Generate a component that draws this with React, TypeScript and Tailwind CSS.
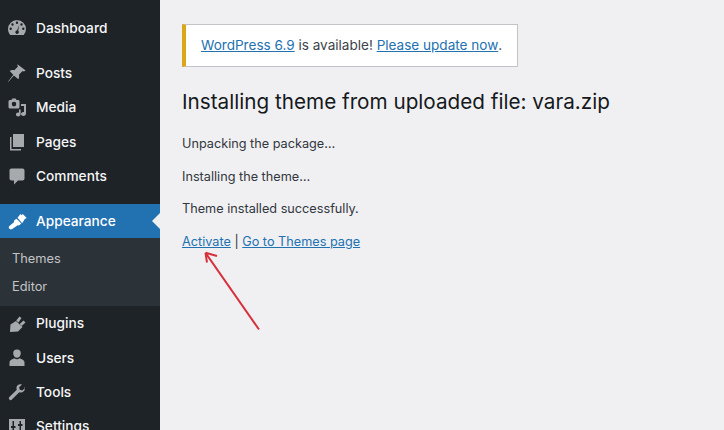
const gray = "#a7aaad";

function DashboardIcon() {
  return (
    <svg width="20" height="20" viewBox="0 0 20 20" fill={gray}>
      <path
        fillRule="evenodd"
        d="M10 2a9 9 0 0 0-9 9c0 2.300.9 4.500 2.300 6h13.400a9 9 0 0 0 2.300-6 9 9 0 0 0-9-9zM10 3.500a1.200 1.200 0 1 1 0 2.400 1.200 1.200 0 0 1 0-2.400zM5.500 5.300a1.200 1.200 0 1 1 0 2.400 1.200 1.200 0 0 1 0-2.400zM3.700 9.500a1.200 1.200 0 1 1 0 2.400 1.200 1.200 0 0 1 0-2.400zM14.500 5.300a1.200 1.200 0 1 1 0 2.400 1.200 1.200 0 0 1 0-2.400zM16.300 9.500a1.200 1.200 0 1 1 0 2.400 1.200 1.200 0 0 1 0-2.400zM12.200 6.500l-1 6.200a1.800 1.800 0 1 1-2.400 0.200c.4-.4.900-.6 1.400-.6z"
      />
    </svg>
  );
}

function PostsIcon() {
  return (
    <svg width="20" height="20" viewBox="0 0 20 20" fill={gray}>
      <path d="M10.400 1.300l8.300 6.100-1.900 1.200-1.200-.5-3.700 3.700c.5 1.700.2 3.300-.6 4.500L6.900 12.400 1.500 18.800l-.4-.4 5.200-6.600-3.600-3.900c1.200-.9 2.900-1.200 4.600-.6L11 3.600l-.6-1.200z" />
    </svg>
  );
}

function MediaIcon() {
  return (
    <svg width="20" height="20" viewBox="0 0 20 20" fill={gray}>
      <path
        fillRule="evenodd"
        d="M3 2h1.500l.8-1.500h3.400L9.500 2H11c.8 0 1.500.7 1.500 1.500V9c0 .8-.7 1.500-1.500 1.500H3c-.8 0-1.500-.7-1.500-1.500V3.500C1.500 2.700 2.200 2 3 2zm4 1.800a2.300 2.300 0 1 0 0 4.600 2.300 2.300 0 0 0 0-4.600z"
      />
      <path d="M19 6v9.500c0 1.400-1.200 2.500-2.500 2.500S14 17.200 14 16s1.100-2.300 3-2V8h-3V6zM12 11.500h1.600v4.800c0 1.200-1 2.200-2.300 2.200S9 17.600 9 16.500s1-2.200 3-1.800z" />
    </svg>
  );
}

function PagesIcon() {
  return (
    <svg width="20" height="20" viewBox="0 0 20 20" fill={gray}>
      <path d="M6 2h11v13H6zM3 5h1.500v12h9.500v1.500H3z" />
    </svg>
  );
}

function CommentsIcon() {
  return (
    <svg width="20" height="20" viewBox="0 0 20 20" fill={gray}>
      <path d="M4.500 2.500h11c1.100 0 2 .9 2 2v8c0 1.100-.9 2-2 2H11L7 18.500v-4H4.500c-1.100 0-2-.9-2-2v-8c0-1.100.9-2 2-2z" />
    </svg>
  );
}

function AppearanceIcon() {
  return (
    <svg width="20" height="20" viewBox="0 0 20 20" fill="#ffffff">
      <path d="M10.500 6.800L13.500 3l1.300 1.300L15.800 3l3.900 4-1.900 1-2.600 4.300z" />
      <path d="M9.500 7.800l4.800 4.700-1.700 1.600c-.5.400-1.200.4-1.900.2L5.200 18c-1.100.7-2.300.4-3-.4-.7-.8-.6-1.900.2-2.700l4.800-3.900c-.3-.8-.2-1.500.4-2z" />
    </svg>
  );
}

function PluginsIcon() {
  return (
    <svg width="20" height="20" viewBox="0 0 20 20" fill={gray}>
      <path d="M3 18l.5-7.500L9 7l6.500 6-4.500 4.500z" />
      <path d="M9.200 6.500l3.300-4 2 1.500-3 4.500zM12.700 10l3.800-3.500 2 2-3.800 3.500z" />
    </svg>
  );
}

function UsersIcon() {
  return (
    <svg width="20" height="20" viewBox="0 0 20 20" fill={gray}>
      <path d="M10 1.500a3.800 3.800 0 0 1 3.800 3.900c0 2.200-1.700 4.300-3.800 4.300S6.200 7.600 6.200 5.400A3.800 3.800 0 0 1 10 1.500zM2.500 14.500c0-1.400 1-2.500 2.200-3.100l2.600-1.100c.8.700 1.700 1 2.700 1s1.900-.3 2.700-1l2.600 1.100c1.200.6 2.200 1.700 2.200 3.100V18h-15z" />
    </svg>
  );
}

function ToolsIcon() {
  return (
    <svg width="20" height="20" viewBox="0 0 20 20" fill={gray}>
      <path d="M18.200 5.700l-2.900 2.700-2.500-.6-.7-2.500L15 2.500c-1.400-.6-3.200-.3-4.400.8-1.200 1.200-1.500 3-.8 4.500l-7.400 7.300c-.7.700-.7 1.800 0 2.500s1.800.7 2.500 0l7.400-7.400c1.500.6 3.200.3 4.400-.9 1.200-1.100 1.500-3 .5-4.600z" />
    </svg>
  );
}

function SettingsIcon() {
  return (
    <svg width="20" height="20" viewBox="0 0 20 20" fill={gray}>
      <path
        fillRule="evenodd"
        d="M2 2h16v16H2zM5.500 4v5H4v2h1.500v5h1.500v-5h1.500V9H7V4zM12.500 4v3H11v2h1.500v7H14V9h1.500V7H14V4z"
      />
    </svg>
  );
}

function MenuItem({ icon, label }: { icon: React.ReactNode; label: string }) {
  return (
    <div className="flex h-[34.300px] shrink-0 items-center gap-[9px] pl-[7px] text-[13.700px] font-[450] text-[#f6f6f7]">
      <span className="flex w-[20px] shrink-0 justify-center">{icon}</span>
      <span>{label}</span>
    </div>
  );
}

function Sidebar() {
  return (
    <aside className="flex h-[430px] w-[160px] shrink-0 flex-col overflow-hidden bg-[#1d2327]">
      <div className="mt-[11px] mb-[11px]">
        <MenuItem icon={<DashboardIcon />} label="Dashboard" />
      </div>
      <MenuItem icon={<PostsIcon />} label="Posts" />
      <MenuItem icon={<MediaIcon />} label="Media" />
      <MenuItem icon={<PagesIcon />} label="Pages" />
      <MenuItem icon={<CommentsIcon />} label="Comments" />

      <div className="relative mt-[11px] flex h-[34px] shrink-0 items-center gap-[9px] bg-[#2271b1] pl-[7px] text-[13.700px] font-[450] text-white">
        <span className="flex w-[20px] shrink-0 justify-center">
          <AppearanceIcon />
        </span>
        <span>Appearance</span>
        <span className="absolute top-[9px] right-0 h-0 w-0 border-y-[8px] border-r-[8px] border-y-transparent border-r-[#f0f0f1]" />
      </div>

      <div className="flex h-[68px] shrink-0 flex-col justify-center gap-[6px] bg-[#2c3338] pt-[2px] pl-3 text-[12.800px] text-[#c3c4c7]">
        <div className="leading-[22px]">Themes</div>
        <div className="leading-[22px]">Editor</div>
      </div>

      <MenuItem icon={<PluginsIcon />} label="Plugins" />
      <MenuItem icon={<UsersIcon />} label="Users" />
      <MenuItem icon={<ToolsIcon />} label="Tools" />
      <MenuItem icon={<SettingsIcon />} label="Settings" />
    </aside>
  );
}

function Arrow() {
  return (
    <svg
      className="absolute top-[250px] left-[203px]"
      width="60"
      height="84"
      viewBox="0 0 60 84"
      fill="none"
      stroke="#d6303a"
      strokeWidth="2"
    >
      <path d="M56 79.500L2.500 2.800" />
      <path d="M2.500 2.800L14 6M2.500 2.800L4 12.500" />
    </svg>
  );
}

export default function App() {
  return (
    <div className="relative flex h-[430px] w-[724px] overflow-hidden bg-[#f0f0f3] font-['Inter',sans-serif]">
      <Sidebar />
      <main className="flex-1 pt-6 pl-[22px]">
        <div className="flex h-[43px] w-[336px] items-center border border-l-4 border-[#c3c4c7] border-l-[#dba617] bg-white pl-[15px] text-[13.550px] text-[#3c434a]">
          <a className="text-[#2271b1] underline">WordPress 6.9</a>
          <span className="whitespace-pre"> is available! </span>
          <a className="text-[#2271b1] underline">Please update now</a>
          <span>.</span>
        </div>
        <h1 className="mt-[20px] text-[20.700px] leading-[30px] font-normal text-[#15191c]">
          Installing theme from uploaded file: vara.zip
        </h1>
        <p className="mt-[17px] text-[12.700px] leading-[20px] text-[#32373c]">Unpacking the package…</p>
        <p className="mt-[13px] text-[12.700px] leading-[20px] text-[#32373c]">Installing the theme…</p>
        <p className="mt-[12px] text-[12.700px] leading-[20px] text-[#32373c]">Theme installed successfully.</p>
        <p className="mt-[13px] text-[12.700px] leading-[20px] text-[#32373c]">
          <a className="text-[#2271b1] underline">Activate</a> |{" "}
          <a className="text-[#2271b1] underline">Go to Themes page</a>
        </p>
      </main>
      <Arrow />
    </div>
  );
}
